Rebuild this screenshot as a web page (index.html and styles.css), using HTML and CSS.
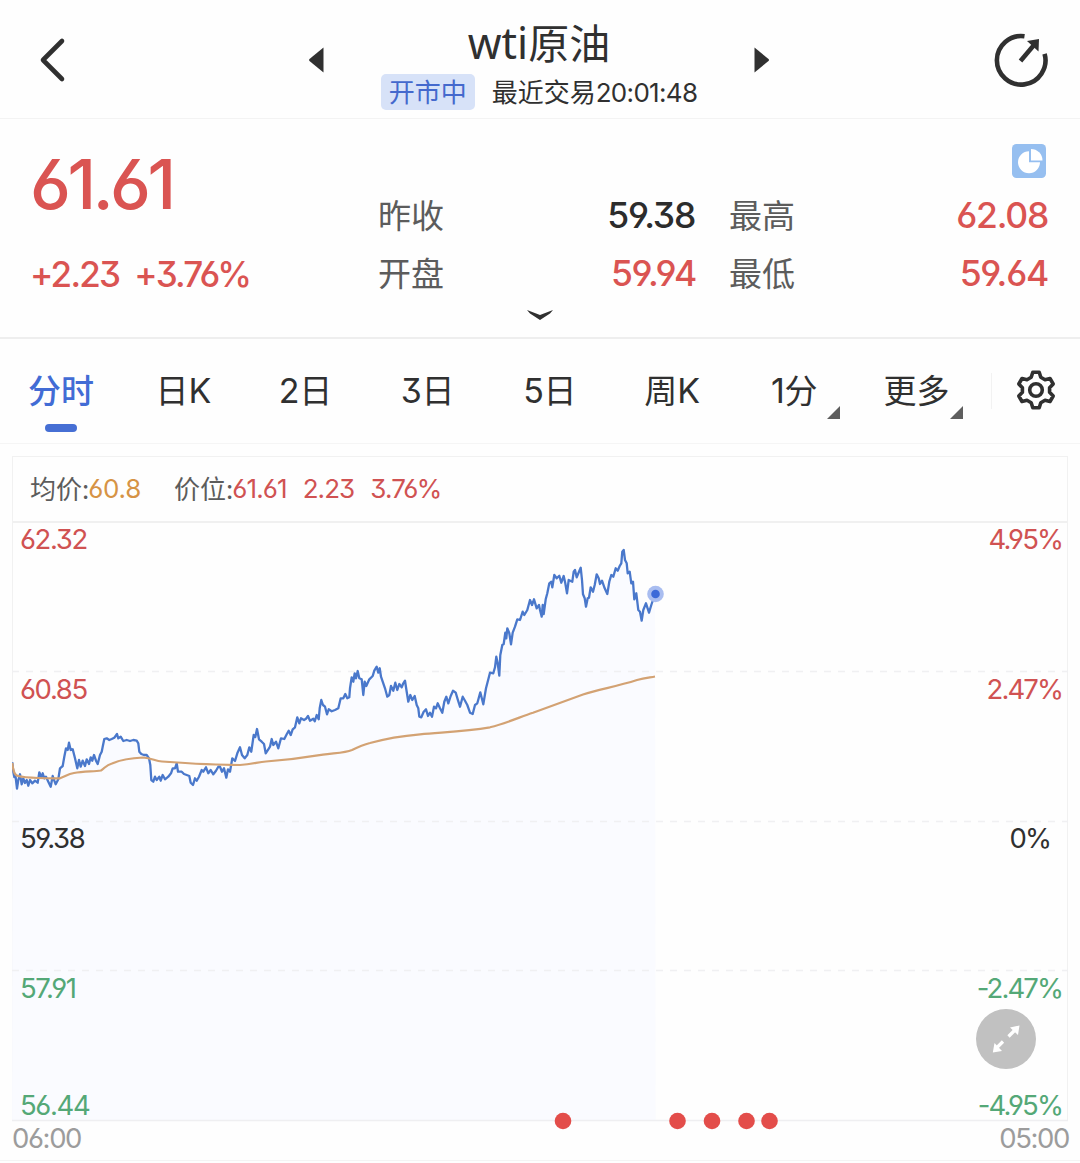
FILE: index.html
```html
<!DOCTYPE html>
<html lang="zh-CN">
<head>
    <meta charset="UTF-8">
    <meta name="viewport" content="width=device-width, initial-scale=1.0">
    <title>wti原油</title>
    <link rel="stylesheet" href="styles.css">
</head>
<body>
    <header class="header">
        <svg class="back" width="28" height="46" viewBox="0 0 28 46"><path d="M24 4L5 23L24 42"/></svg>
        <svg class="arrow" width="16" height="26" viewBox="0 0 16 26"><path d="M15.500 .5V25.500L1.500 14Q.5 13 1.500 12Z"/></svg>
        <div class="heading">
            <h1 class="title"><span class="latin">wti</span>原油</h1>
            <div class="status">
                <span class="badge">开市中</span>
                <span class="last">最近交易<span class="num">20:01:48</span></span>
            </div>
        </div>
        <svg class="arrow" width="16" height="26" viewBox="0 0 16 26"><path d="M.5 .5V25.500L14.500 14Q15.500 13 14.500 12Z"/></svg>
        <svg class="share" width="56" height="56" viewBox="0 0 56 56">
            <path class="ring" d="M31.500 4.200A24.300 24.300 0 1 0 51.600 21.800"/>
            <path class="ring" d="M27.500 29L41 13"/>
            <path class="tip" d="M34 9L46 7L45.500 19.500Z"/>
        </svg>
    </header>

    <section class="quote">
        <div class="price">
            <div class="price-now num">61.61</div>
            <div class="price-diff num"><span>+2.23</span><span>+3.76%</span></div>
        </div>
        <div class="stats">
            <span class="label">昨收</span><span class="value num dark">59.38</span>
            <span class="label">最高</span><span class="value num">62.08</span>
            <span class="label">开盘</span><span class="value num">59.94</span>
            <span class="label">最低</span><span class="value num">59.64</span>
        </div>
        <svg class="pie" width="34" height="34" viewBox="0 0 34 34">
            <rect width="34" height="34" rx="4.500" fill="#96bff0"/>
            <path d="M17 7.200A11 11 0 1 0 28 18.200H17Z" fill="#fff"/>
            <path d="M19 5V16.500H30.500A11.500 11.500 0 0 0 19 5Z" fill="#fff"/>
        </svg>
        <svg class="expand" width="28" height="12" viewBox="0 0 28 12"><path d="M1 1L14 6L27 1L24 4.500L14 11L4 4.500Z"/></svg>
    </section>

    <nav class="tabs">
        <div class="tab active">分时</div>
        <div class="tab">日<span class="num">K</span></div>
        <div class="tab"><span class="num">2</span>日</div>
        <div class="tab"><span class="num">3</span>日</div>
        <div class="tab"><span class="num">5</span>日</div>
        <div class="tab">周<span class="num">K</span></div>
        <div class="tab more"><span class="num">1</span>分</div>
        <div class="tab more">更多</div>
        <div class="settings">
            <svg width="40" height="42" viewBox="0 0 40 42">
                <path d="M16.800 3.200H23.200L24.800 8.300L29 10.700L34 9.500L37.200 15L33.600 18.800V23.200L37.200 27L34 32.500L29 31.300L24.800 33.700L23.200 38.800H16.800L15.200 33.700L11 31.300L6 32.500L2.800 27L6.400 23.200V18.800L2.800 15L6 9.500L11 10.700L15.200 8.300Z"/>
                <circle cx="20" cy="21" r="6.300"/>
            </svg>
        </div>
    </nav>

    <main class="chart">
        <div class="legend">
            <span>均价:</span><span class="num avg">60.8</span>
            <span class="second">价位:</span><span class="num up">61.61</span>
            <span class="num up">2.23</span>
            <span class="num up">3.76%</span>
        </div>
        <div class="plot">
            <svg class="canvas" width="1056" height="611" viewBox="12 521 1056 611">
                <path class="area" id="area"/>
                <path class="grid" d="M12 671.500H1068M12 821.500H1068M12 970.500H1068"/>
                <path class="axis" d="M12 1120.500H1068"/>
                <polyline class="line" id="line"/>
                <path class="mean" d="M12.300 763C13 770 14 775 18 776C26 778 50 778.500 60 778.300C66 776 68 774 74 773C84 771.500 94 771.500 101 770.500C105 768 106 765 112 763.500C120 760 132 758 143 757.500C152 758 155 761 162 761.500C190 763.500 215 765 240 765C252 764.500 258 762 266 761.500C280 760.500 300 758.500 323 754.700C335 753 345 753 352 750C358 747 362 745 370 743C386 738.500 400 736 420 734.300C445 732 465 731.500 490 727.300C507 723 520 717 533 712.700L583 694.500C600 689 615 687 637 680C645 678 650 677.500 655 676.500"/>
                <circle cx="655.500" cy="594" r="8.300" fill="#a9bdf0"/>
                <circle cx="655.500" cy="594" r="4.300" fill="#3c6ad8"/>
                <g fill="#e34d4a">
                    <circle cx="563" cy="1121" r="8.300"/>
                    <circle cx="677.500" cy="1121" r="8.300"/>
                    <circle cx="712" cy="1121" r="8.300"/>
                    <circle cx="746.500" cy="1121" r="8.300"/>
                    <circle cx="769.500" cy="1121" r="8.300"/>
                </g>
            </svg>
            <div class="scale num">
                <div class="row up"><span>62.32</span><span class="percent">4.95%</span></div>
                <div class="row up"><span>60.85</span><span class="percent">2.47%</span></div>
                <div class="row zero"><span>59.38</span><span class="percent">0%</span></div>
                <div class="row down"><span>57.91</span><span class="percent">-2.47%</span></div>
                <div class="row down"><span>56.44</span><span class="percent">-4.95%</span></div>
            </div>
            <svg class="fullscreen" width="60" height="60" viewBox="0 0 60 60">
                <circle cx="30" cy="30" r="30" fill="#c1c1c1"/>
                <path d="M32.500 27.500L39 21M27 32.500L20.500 39" stroke="#fff" stroke-width="3.200"/>
                <path d="M34 18.500L43.500 16.500L42 26ZM18.500 34L16.800 43.500L26 42Z" fill="#fff"/>
            </svg>
        </div>
    </main>
    <footer class="times num"><span>06:00</span><span>05:00</span></footer>

    <script src="chart.js"></script>
</body>
</html>
```
FILE: styles.css
```css
* {
    box-sizing: border-box;
}
body {
    margin: 0;
    width: 1080px;
    height: 1163px;
    overflow: hidden;
    background: #fefefe;
    color: #303030;
    font-family: "Noto Sans CJK SC", sans-serif;
}
svg {
    display: block;
}
.num {
    font-family: Inter, "Noto Sans CJK SC", sans-serif;
    font-feature-settings: "cv03", "cv04", "cv09";
    letter-spacing: -0.05em;
}
.header {
    display: flex;
    align-items: center;
    height: 119px;
    padding: 1px 32px 0 38px;
    border-bottom: 1px solid #f3f3f3;
}
.back {
    fill: none;
    stroke: #303030;
    stroke-width: 4.6;
    stroke-linecap: round;
    stroke-linejoin: round;
    margin-right: 242px;
}
.arrow {
    fill: #303030;
}
.heading {
    width: 430px;
    height: 118px;
    padding-top: 13px;
    text-align: center;
}
.title {
    margin: 0;
    font-size: 41px;
    line-height: 54px;
    font-weight: 400;
}
.latin {
    font-family: "Noto Sans", sans-serif;
    font-size: 43px;
}
.status {
    display: flex;
    justify-content: center;
    align-items: center;
    gap: 17px;
    margin-top: 4px;
    font-size: 26px;
    line-height: 34px;
}
.status .num {
    letter-spacing: -0.026em;
}
.badge {
    width: 94px;
    height: 36px;
    border-radius: 5px;
    background: #d7e2f8;
    color: #4469cd;
}
.share {
    margin-left: auto;
    margin-right: -1px;
}
.share .ring {
    fill: none;
    stroke: #303030;
    stroke-width: 4.6;
}
.share .tip {
    fill: #303030;
}
.quote {
    position: relative;
    display: flex;
    height: 220px;
    padding: 0 32px 0 30px;
    border-bottom: 2px solid #eeeeee;
    color: #da5452;
}
.price {
    width: 348px;
}
.price-now {
    margin-top: 29px;
    font-size: 69px;
    line-height: 72px;
    font-weight: 500;
}
.price-diff {
    display: flex;
    gap: 15px;
    margin-top: 33px;
    font-size: 35px;
    line-height: 42px;
    font-weight: 450;
}
.stats {
    display: grid;
    grid-template-columns: 90px 228px 123px 229px;
    grid-template-rows: 58px 58px;
    margin-top: 67px;
    align-items: center;
}
.label {
    font-size: 33px;
    line-height: 54px;
    padding-bottom: 2px;
    white-space: nowrap;
    color: #5c5c5c;
}
.label:nth-of-type(4n + 3) {
    padding-left: 33px;
}
.value {
    text-align: right;
    font-size: 35.5px;
    font-weight: 450;
    letter-spacing: -0.035em;
}
.dark {
    color: #2c2c2c;
    padding-right: 1px;
}
.pie {
    position: absolute;
    top: 25px;
    right: 34px;
}
.expand {
    position: absolute;
    top: 190px;
    left: 526px;
    fill: #303030;
}
.tabs {
    display: flex;
    height: 105px;
    border-bottom: 1px solid #f5f5f5;
}
.tab {
    position: relative;
    width: 122.2px;
    padding-top: 25px;
    text-align: center;
    font-size: 33px;
    line-height: 50px;
}
.tab .num {
    font-size: 34px;
    letter-spacing: -0.01em;
}
.active {
    color: #426cd5;
    font-weight: 500;
}
.active::after {
    content: "";
    position: absolute;
    left: 45px;
    top: 85px;
    width: 32px;
    height: 8px;
    border-radius: 4px;
    background: #466fd4;
}
.more::after {
    content: "";
    position: absolute;
    right: 15px;
    top: 67px;
    border-left: 13px solid transparent;
    border-bottom: 13px solid #5e5e5e;
}
.settings {
    height: 36px;
    margin: 34px 0 0 13px;
    padding-left: 24px;
    border-left: 1px solid #f2f2f2;
}
.settings svg {
    margin-top: -4px;
    fill: none;
    stroke: #303030;
    stroke-width: 3.6;
    stroke-linejoin: round;
}
.chart {
    margin: 12px 12px 0;
    border: 1px solid #f1f1f1;
    border-bottom: 0;
}
.legend {
    display: flex;
    height: 66px;
    padding-left: 17px;
    font-size: 26px;
    line-height: 62px;
    color: #5c5c5c;
    border-bottom: 2px solid #f0f0f0;
}
.legend .num {
    line-height: 64px;
    margin-left: -1px;
    letter-spacing: -0.035em;
}
.legend .avg {
    color: #d69345;
    letter-spacing: -0.01em;
}
.legend .second {
    margin-left: 33px;
}
.legend .up + .up {
    margin-left: 16px;
}
.up {
    color: #d05252;
}
.down {
    color: #54a877;
}
.zero {
    color: #303030;
}
.plot {
    position: relative;
    height: 598px;
}
.canvas {
    position: absolute;
    left: -1px;
    top: -2px;
}
.grid {
    stroke: #f0f0f2;
    stroke-width: 1.5;
    stroke-dasharray: 7 7;
}
.area {
    fill: #f9fbff;
    fill-opacity: 0.9;
}
.axis {
    stroke: #efeff1;
    stroke-width: 1.5;
}
.line {
    fill: none;
    stroke: #4a78cb;
    stroke-width: 2.3;
    stroke-linejoin: round;
}
.mean {
    fill: none;
    stroke: #d3a273;
    stroke-width: 2.2;
}
.scale {
    position: relative;
    display: flex;
    flex-direction: column;
    font-size: 27.5px;
    line-height: 32px;
}
.row {
    display: flex;
    justify-content: space-between;
    height: 149.700px;
    padding: 0 5px 0 7px;
}
.percent {
    letter-spacing: -0.07em;
}
.zero {
    padding-right: 17px;
}
.down {
    height: 117px;
}
.fullscreen {
    position: absolute;
    right: 31px;
    top: 486px;
}
.times {
    display: flex;
    justify-content: space-between;
    height: 40px;
    padding: 0 11px 0 12px;
    border-bottom: 1px solid #f4f4f4;
    font-size: 27.5px;
    line-height: 34px;
    color: #9c9c9c;
}
```
FILE: chart.js
```js
// price line, one point per tick
const points = [
    [12.3,762.3],[13.3,771.7],[14.3,777],[15.5,776],[17,788.7],[18.3,780],[20,774.3],[21.7,784.3],[23.3,778.3],[25,783],
    [26.7,780],[28.3,785.7],[30,780],[32.3,783.3],[35,780.7],[37.7,782.7],[39.3,772.3],[41.3,777.3],[42.7,773.3],[44.3,778.3],
    [46,776.7],[48.3,781.7],[50.7,786.7],[52.7,776],[54.3,780.7],[55.7,784.3],[58.3,779.3],[60,768.3],[62.7,766],[64.3,756.7],
    [66,748.3],[67.7,750],[69,742.7],[70.7,750],[72.7,749.3],[75,758.3],[77.3,768.3],[79,760],[80.7,766.7],[82.7,760.7],
    [85,766],[86.7,759.3],[89,764],[90.7,757.3],[92.3,760.7],[94,755],[96,760.7],[97.7,764],[100,755],[101.7,751.7],
    [102.7,746.7],[104.3,739],[106.7,738.3],[109.3,740],[111.7,739],[114.3,737.7],[117,734],[118.3,738.3],[120.7,736.7],[123.3,741],
    [126.7,740],[130,741],[133.3,740],[136.7,740.7],[138.3,743.3],[139.3,751.7],[141.3,754],[144,755],[146.7,755],[149,758.3],
    [150.3,765],[151.3,780],[153.3,781.7],[155,776.7],[156.7,780],[159.3,776.7],[160.7,780.7],[162.7,775],[165,779.3],[168.3,776.7],
    [171,773.3],[172.7,768.3],[175,768.3],[176.7,763.3],[178,771.7],[181.7,771.7],[184,774],[186.7,775],[189.3,776],[190.7,782.7],
    [193,785],[195,778.3],[196.7,780.7],[199,776.7],[201.7,770],[203.3,771.7],[206,767.3],[208.3,773.3],[210.7,770],[213.3,774.3],
    [216,770.7],[218.3,766.7],[220,766.7],[222,771.7],[224,768.3],[226.3,777.7],[228,769.3],[230,771.7],[232.3,758.3],[235,761],
    [237.3,753.3],[240,747.3],[242,755],[244.7,758.3],[247.3,755],[249.3,747.3],[251.3,751.7],[253.7,735],[255.3,737],[257,729],
    [259,739.3],[261.7,741.7],[264,744],[265.7,753.3],[268.3,749.3],[270,746.7],[271.7,739],[273.3,745],[276,741.7],[278.3,748.3],
    [281,738.3],[284.3,739],[286.7,734.3],[288.7,730.7],[290.7,735],[292.7,729.3],[295,727.3],[297.3,717.3],[299.3,723.3],[301,718.3],
    [304,720],[306,718.7],[308,716],[310,720.7],[313.3,718.7],[314.7,721.3],[316.7,715],[318.7,719.3],[319.7,708.3],[321.3,700],
    [323,705],[325,706.7],[327,714.3],[328.7,709.3],[331.7,711.3],[335,710],[338.3,708.3],[340.7,698.3],[343.3,698.3],[345.3,694],
    [347.3,698.3],[349.3,697.3],[350,688.3],[351.7,677.3],[353.3,681.7],[354.7,673.3],[356,678.3],[357.7,671],[359.3,678.3],[361.7,679.3],
    [363.3,695],[364.7,681.7],[366.3,686],[369.3,679.3],[372.7,676],[374.3,670.7],[376.7,666.7],[378.3,672.7],[379.7,668.3],[381,676.7],
    [382.7,681.7],[385,688.3],[387.3,696.7],[389.3,695],[391,686],[393.3,690.7],[395.3,682.7],[397.3,690],[399.3,684],[401.7,687.3],
    [403.3,683.3],[405,680.7],[406.7,691.7],[408.3,701.7],[410.3,695],[412.3,700],[414.7,696],[416.7,705],[418.3,708.3],[419.3,716.7],
    [421.3,717.3],[423.7,711.7],[426,709.3],[428,716],[430,712.7],[432,716.7],[434,706.7],[436,708.3],[437.7,703.3],[440,708.3],
    [442.3,712.7],[444.3,701.7],[446.3,696.7],[448.3,703.3],[450.7,696],[453,690.7],[455.7,692.7],[457.7,699.3],[460,706.7],[462.7,696.7],
    [465,700.7],[467.3,705],[470,712.7],[472.7,714],[475,705],[477.3,703.3],[480.3,692.3],[483.3,704.3],[486,688.3],[490,672.7],
    [493.3,673.3],[495,667.3],[496.3,656.7],[497.7,663.3],[499.3,675.7],[500.3,655],[502.3,645],[503.7,644],[505.3,632.7],[506.3,638.3],
    [507.3,628.3],[509.3,633.3],[511,644.3],[512.7,632.7],[515,626.7],[517.3,619.3],[520,620],[522.7,611.7],[524.3,615],[527.3,610],
    [530,600],[532,605],[534,599.3],[536.7,608.3],[539,605],[540,610],[541.7,616.7],[542.7,605],[543.7,614],[545.7,599.3],
    [547.3,593.3],[549.3,583.3],[551.3,581.7],[552.3,587.3],[554.3,575],[556.7,578.3],[559.3,575.7],[561.3,582.7],[563.7,576],[565.3,583.3],
    [567,593.3],[568.7,580],[572.3,581.7],[573.7,571.7],[575,570],[576.7,577.3],[579,571.7],[580.7,567.7],[582,580],[583,594.3],
    [584.7,598.3],[586,606.7],[587.7,598.3],[589,597.7],[590.7,587.3],[593,591.7],[594.7,585],[596.7,574.3],[598.7,578.3],[600,584],
    [602,580.7],[604.7,588.3],[607.3,594],[609.3,581.7],[611.3,575],[613.3,576.7],[615.7,568.3],[617.7,570.7],[619.7,566],[621.3,563.3],
    [622.3,551.7],[623.7,550],[625,560],[626.7,563.3],[627.7,573.3],[629.7,571.7],[631.3,583.3],[633,581.7],[634.3,599.3],[636.3,593.3],
    [638.3,610],[640,611.7],[641.7,620.7],[643.3,610],[646,603.3],[649,612.7],[651.3,605],[655,594]
];

const coords = points.map(p => p.join(',')).join(' ');
document.getElementById('line').setAttribute('points', coords);
document.getElementById('area').setAttribute('d', 'M12,1120 L' + coords + ' L655.500,1120 Z');
```
